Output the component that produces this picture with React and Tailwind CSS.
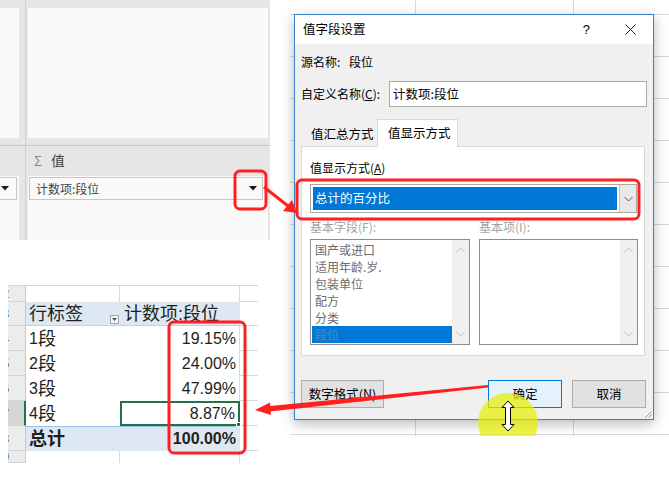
import React from 'react'

const cjk = "font-['Noto_Sans_CJK_SC',sans-serif]"
const xl = "font-['Liberation_Sans','Noto_Sans_CJK_SC',sans-serif]"

function Caret() {
    return (
        <svg width="8" height="5" viewBox="0 0 8 5">
            <path d="M0 0h8L4 4.5z" fill="#1a1a1a" />
        </svg>
    )
}

function Chevron({ up, color = '#555' }) {
    return (
        <svg width="9" height="6" viewBox="0 0 9 6">
            <path d={up ? 'M0.5 5l4-4 4 4' : 'M0.5 1l4 4 4-4'} fill="none" stroke={color} strokeWidth="1" />
        </svg>
    )
}

function Divider() {
    return (
        <div className="w-[9px] shrink-0 pl-[6px]">
            <div className="h-full w-px bg-[#d0d0d0]" />
        </div>
    )
}

function FieldPane() {
    return (
        <div className={`flex h-[240px] w-[270px] flex-col bg-[#e6e6e6] ${cjk}`}>
            <div className="flex h-[8px]"><div className="w-[19px]" /><Divider /></div>
            <div className="flex h-[130px]">
                <div className="w-[19px] bg-[#fafafa]" />
                <Divider />
                <div className="w-[240px] bg-[#fafafa]" />
            </div>
            <div className="flex h-[7px]"><div className="w-[19px]" /><Divider /></div>
            <div className="h-px bg-[#c8c8c8]" />
            <div className="flex h-[30px]">
                <div className="w-[19px]" />
                <Divider />
                <div className="flex w-[240px] items-center pl-[6px] text-[13.5px] leading-none">
                    <span className="text-[#8a8a8a]">Σ</span>
                    <span className="ml-[9px] text-[#3c3c3c]">值</span>
                </div>
            </div>
            <div className="flex flex-1">
                <div className="w-[19px] bg-[#fafafa] pt-[1px]">
                    <div className="flex h-[23px] w-[17px] items-center border border-l-0 border-[#c6c6c6] pl-[1px]">
                        <Caret />
                    </div>
                </div>
                <Divider />
                <div className="w-[240px] bg-[#fafafa] pl-[1px] pt-[1px]">
                    <div className="flex h-[23px] w-[234px] items-center justify-between border border-[#c6c6c6] pl-[6px] pr-[5px] text-[12px] leading-none text-[#444]">
                        <span>计数项:段位</span>
                        <Caret />
                    </div>
                </div>
            </div>
        </div>
    )
}

function RowHead({ n, active }) {
    return (
        <div className={`flex w-[18px] shrink-0 items-center overflow-hidden border-b border-r border-b-[#d4d4d4] ${active ? 'border-r-2 border-r-[#217346] bg-[#d6d6d6]' : 'border-r-[#c8c8c8] bg-[#ececec]'}`}>
            <span className="-ml-[6px] text-[13px] leading-none text-[#555]">{n}</span>
        </div>
    )
}

function PivotSheet() {
    const rows = [
        ['1', '19.15%'],
        ['2', '24.00%'],
        ['3', '47.99%'],
        ['4', '8.87%']
    ]

    return (
        <div className={`ml-[8px] mt-[45px] w-[250px] border-t border-[#d6d6d6] leading-none text-[#1e1e1e] ${xl}`}>
            <div className="flex h-[16px]">
                <RowHead n="2" />
                <div className="w-[94px] border-r border-[#dadada]" />
                <div className="w-[120px] border-r border-[#dadada]" />
                <div className="w-[18px] border-b border-[#dadada]" />
            </div>
            <div className="flex h-[24px]">
                <RowHead n="3" />
                <div className="flex w-[94px] items-center border-b border-[#bcd2e8] bg-[#dde8f3] pl-[3px] text-[18px]">
                    <span>行标签</span>
                    <div className="ml-auto mr-[1px] mt-[12px] flex h-[9px] w-[9px] items-center justify-center border border-[#a8a8a8] bg-[#f4f4f4]">
                        <svg width="5" height="3" viewBox="0 0 5 3"><path d="M0 0h5L2.5 3z" fill="#555" /></svg>
                    </div>
                </div>
                <div className="flex w-[120px] items-center border-b border-[#bcd2e8] bg-[#dde8f3] pl-[4px] text-[18px]">
                    计数项:段位
                </div>
                <div className="w-[18px] border-b border-[#dadada]" />
            </div>
            {rows.map(([n, v], i) => (
                <div key={n} className="flex h-[25px]">
                    <RowHead n={String(i + 4)} active={i === 3} />
                    <div className="flex w-[94px] items-center pl-[3px]">
                        <span className="text-[16px]">{n}</span>
                        <span className="text-[18px]">段</span>
                    </div>
                    <div className={`relative flex w-[120px] items-center justify-end pr-[3px] text-[16px] ${i === 3 ? 'border-2 border-[#217346]' : 'border-r border-[#dadada]'}`}>
                        {v}
                        {i === 3 && <div className="absolute -bottom-[3px] -right-[3px] h-[5px] w-[5px] border border-white bg-[#217346]" />}
                    </div>
                    <div className="w-[18px] border-b border-[#dadada]" />
                </div>
            ))}
            <div className="flex h-[25px]">
                <RowHead n="8" />
                <div className="flex w-[94px] items-center border-t border-[#9bc2e6] bg-[#dde8f3] pl-[3px] text-[18px] font-bold">
                    总计
                </div>
                <div className="flex w-[120px] items-center justify-end border-t border-[#9bc2e6] bg-[#dde8f3] pr-[4px] text-[16px] font-bold">
                    100.00%
                </div>
                <div className="w-[18px] border-b border-[#dadada]" />
            </div>
            <div className="flex h-[12px]">
                <RowHead n="9" />
                <div className="w-[94px] border-r border-[#dadada]" />
                <div className="w-[120px] border-r border-[#dadada]" />
                <div className="w-[18px]" />
            </div>
        </div>
    )
}

function ListBox({ items, selected, className }) {
    return (
        <div className={`flex h-[106px] border border-[#8c8c8c] bg-white ${className}`}>
            <div className="flex-1 pl-[1px] pt-[1px]">
                {items.map((item) => (
                    <div
                        key={item}
                        className={`flex h-[17px] items-center pl-[3px] leading-none ${item === selected ? 'bg-[#0078d7] text-[#5d86b5]' : 'text-[#6d6d6d]'}`}
                    >
                        {item}
                    </div>
                ))}
            </div>
            <div className="flex w-[17px] flex-col items-center justify-between bg-[#f0f0f0] py-[7px]">
                <Chevron up color="#bdbdbd" />
                <Chevron color="#bdbdbd" />
            </div>
        </div>
    )
}

function Dialog() {
    return (
        <div className={`relative flex h-[406px] w-[360px] flex-col border border-[#3c80c4] bg-[#f0f0f0] text-[12px] leading-none text-black shadow-[0_4px_12px_rgba(0,0,0,0.28)] ${cjk}`}>
            <div className="flex h-[29px] shrink-0 items-center bg-white pl-[8px]">
                <span className="text-[12.5px]">值字段设置</span>
                <span className="ml-auto font-['Liberation_Sans',sans-serif] text-[13px]">?</span>
                <svg className="ml-[35px] mr-[17px]" width="11" height="11" viewBox="0 0 11 11">
                    <path d="M0.5 0.5l10 10M10.5 0.5l-10 10" stroke="#222" strokeWidth="1" />
                </svg>
            </div>

            <div className="flex flex-col pl-[6px] pr-[6px]">
                <div className="mt-[9px] flex h-[18px] items-center">
                    <span className="w-[48px]">源名称:</span>
                    <span>段位</span>
                </div>

                <div className="mt-[10px] flex h-[26px] items-center">
                    <span className="w-[88px]">自定义名称(<span className="underline">C</span>):</span>
                    <div className="flex h-[26px] w-[258px] items-center border border-[#ababab] bg-white pl-[3px] text-[12.5px]">
                        计数项:段位
                    </div>
                </div>

                <div className="relative z-10 mt-[12px] flex h-[27px] items-end">
                    <div className="flex h-[24px] w-[76px] items-center pl-[10px] text-[12.5px]">值汇总方式</div>
                    <div className="-mb-px flex h-[28px] w-[81px] items-center border border-b-0 border-[#d9d9d9] bg-white pl-[10px] text-[12.5px]">
                        值显示方式
                    </div>
                </div>

                <div className="h-[210px] w-[344px] border border-[#d9d9d9] bg-white pl-[8px]">
                    <div className="mt-[13px] flex h-[16px] items-center">
                        值显示方式(<span className="underline">A</span>)
                    </div>
                    <div className="mt-[8px] flex h-[29px] w-[327px] border border-[#a8a8a8] bg-white">
                        <div className="m-[2px] flex flex-1 items-center bg-[#0078d7] pl-[2px] text-[12.5px] text-white">
                            总计的百分比
                        </div>
                        <div className="flex w-[17px] items-center justify-center border-l border-[#c4c4c4] bg-[#e8e8e8]">
                            <Chevron />
                        </div>
                    </div>
                    <div className="mt-[6px] flex h-[16px] items-center text-[#a3a3a3]">
                        <span className="w-[169px]">基本字段(F):</span>
                        <span>基本项(I):</span>
                    </div>
                    <div className="mt-[4px] flex gap-[9px]">
                        <ListBox
                            className="w-[160px]"
                            items={['国产或进口', '适用年龄.岁.', '包装单位', '配方', '分类', '段位']}
                            selected="段位"
                        />
                        <ListBox className="w-[159px]" items={[]} />
                    </div>
                </div>

                <div className="mt-[24px] flex h-[28px] pr-[1px] text-[12.5px]">
                    <div className="flex w-[83px] items-center justify-center border border-[#adadad] bg-[#e1e1e1]">数字格式(N)</div>
                    <div className="ml-auto flex w-[74px] items-center justify-center border border-[#0078d7] bg-[#e5f1fb]">确定</div>
                    <div className="ml-[10px] flex w-[74px] items-center justify-center border border-[#adadad] bg-[#e1e1e1]">取消</div>
                </div>
            </div>

            <svg className="absolute bottom-[1px] right-[1px]" width="7" height="7" viewBox="0 0 7 7">
                <path d="M6.5 0.5l-6 6M6.5 3.5l-3 3" stroke="#9a9a9a" strokeWidth="1" />
            </svg>
        </div>
    )
}

function Marks() {
    return (
        <svg className="pointer-events-none absolute left-0 top-0" width="669" height="481" viewBox="0 0 669 481">
            <defs>
                <clipPath id="shot">
                    <rect x="0" y="0" width="669" height="436" />
                </clipPath>
            </defs>
            <circle cx="508" cy="423" r="30" fill="#e6f000" fillOpacity="0.72" clipPath="url(#shot)" />
            <g fill="none" stroke="#ff1f1f" strokeWidth="3">
                <rect x="235" y="171" width="31" height="38" rx="5" />
                <rect x="297" y="180" width="342" height="39" rx="5" />
                <rect x="169" y="322" width="76" height="131" rx="5" />
            </g>
            <line x1="264" y1="187" x2="288" y2="206" stroke="#ff1f1f" strokeWidth="3" />
            <polygon points="297,213 283,211 292,200" fill="#ff1f1f" />
            <polygon points="488,385 488,387.5 270,411.5 270,406" fill="#ff1f1f" />
            <polygon points="255,410 270,402.5 271,415" fill="#ff1f1f" />
            <path
                d="M508 401L514 407.5H510.5V424.5H514L508 431L502 424.5H505.5V407.5H502Z"
                fill="#fff"
                stroke="#000"
                strokeWidth="1"
            />
        </svg>
    )
}

export default function App() {
    return (
        <div className="relative flex h-[481px] w-[669px] overflow-hidden bg-white">
            <div className="flex w-[270px] shrink-0 flex-col">
                <FieldPane />
                <PivotSheet />
            </div>
            <div className="ml-[20px] h-[436px] w-[379px] bg-white bg-[linear-gradient(to_right,#d8d8d8_1px,transparent_1px),linear-gradient(to_bottom,#d8d8d8_1px,transparent_1px)] bg-[size:158px_42px] bg-[position:125px_14px] pl-[4px] pt-[14px]">
                <Dialog />
            </div>
            <Marks />
        </div>
    )
}
